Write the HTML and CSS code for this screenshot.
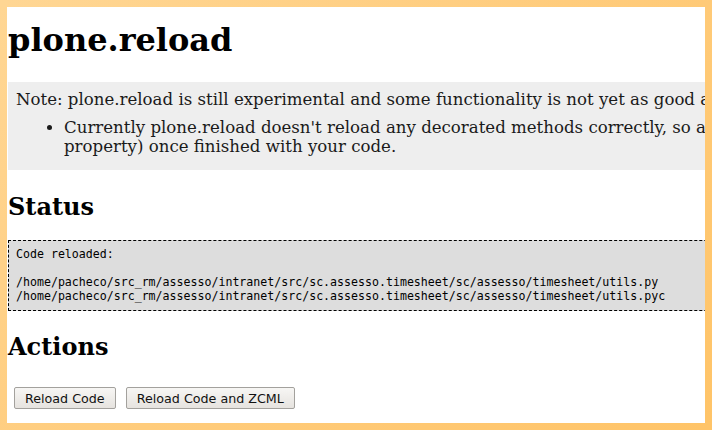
FILE: index.html
```html
<!DOCTYPE html>
<html>
<head>
<meta charset="utf-8">
<title>plone.reload</title>
<link rel="stylesheet" href="styles.css">
</head>
<body>
<div class="frame">
  <div class="page">
    <h1 class="title">plone.reload</h1>
    <div class="note">
      <p class="note-text">Note: plone.reload is still experimental and some functionality is not yet as good as it should be.</p>
      <ul class="note-list">
        <li>Currently plone.reload doesn't reload any decorated methods correctly, so always restart the server (or reload the property) once finished with your code.</li>
      </ul>
    </div>
    <h2 class="section section-status">Status</h2>
    <pre class="status">Code reloaded:

/home/pacheco/src_rm/assesso/intranet/src/sc.assesso.timesheet/sc/assesso/timesheet/utils.py
/home/pacheco/src_rm/assesso/intranet/src/sc.assesso.timesheet/sc/assesso/timesheet/utils.pyc</pre>
    <h2 class="section section-actions">Actions</h2>
    <form class="actions">
      <button type="button" class="btn">Reload Code</button>
      <button type="button" class="btn">Reload Code and ZCML</button>
    </form>
  </div>
</div>
</body>
</html>
```
FILE: styles.css
```css
html, body {
  margin: 0;
  padding: 0;
  background: #ffffff;
}
.frame {
  width: 712px;
  height: 430px;
  box-sizing: border-box;
  border: 7px solid #ffcc7a;
  border-image: linear-gradient(135deg, #ffd693 0%, #ffcc7c 50%, #ffc468 100%) 1;
  overflow: hidden;
  position: relative;
}
.page {
  padding: 0 0 0 1px;
  width: 1080px;
  font-family: "DejaVu Serif", serif;
  color: #000;
}
.title {
  font-family: "DejaVu Serif", serif;
  font-weight: bold;
  font-size: 32px;
  line-height: 38px;
  margin: 14px 0 23px 0;
}
.note {
  background: #eeeeee;
  padding: 8px 8px 14px 8px;
  font-size: 16.6px;
  line-height: 19px;
  color: #1a1a1a;
}
.note-text {
  margin: 0;
}
.note-list {
  margin: 9px 0 0 0;
  padding-left: 48px;
}
.section {
  font-family: "DejaVu Serif", serif;
  font-weight: bold;
  font-size: 24px;
  line-height: 28px;
  margin: 0 0 19px 0;
}
.section-status {
  margin-top: 23px;
}
.section-actions {
  margin-top: 22px;
  margin-bottom: 26px;
}
.status {
  margin: 0;
  background: #dddddd;
  border: 1px dashed #000;
  padding: 6px 7px 7px 7px;
  font-family: "DejaVu Sans Mono", monospace;
  font-size: 11.6px;
  line-height: 14px;
}
.actions {
  margin: 0 0 0 6px;
  display: flex;
  gap: 10px;
}
.btn {
  font-family: "DejaVu Sans", sans-serif;
  font-size: 12.7px;
  color: #111;
  height: 22px;
  padding: 0 10px;
  border: 1px solid #a3a19d;
  border-radius: 2px;
  background: linear-gradient(#f7f6f4, #e6e3df);
}
```
